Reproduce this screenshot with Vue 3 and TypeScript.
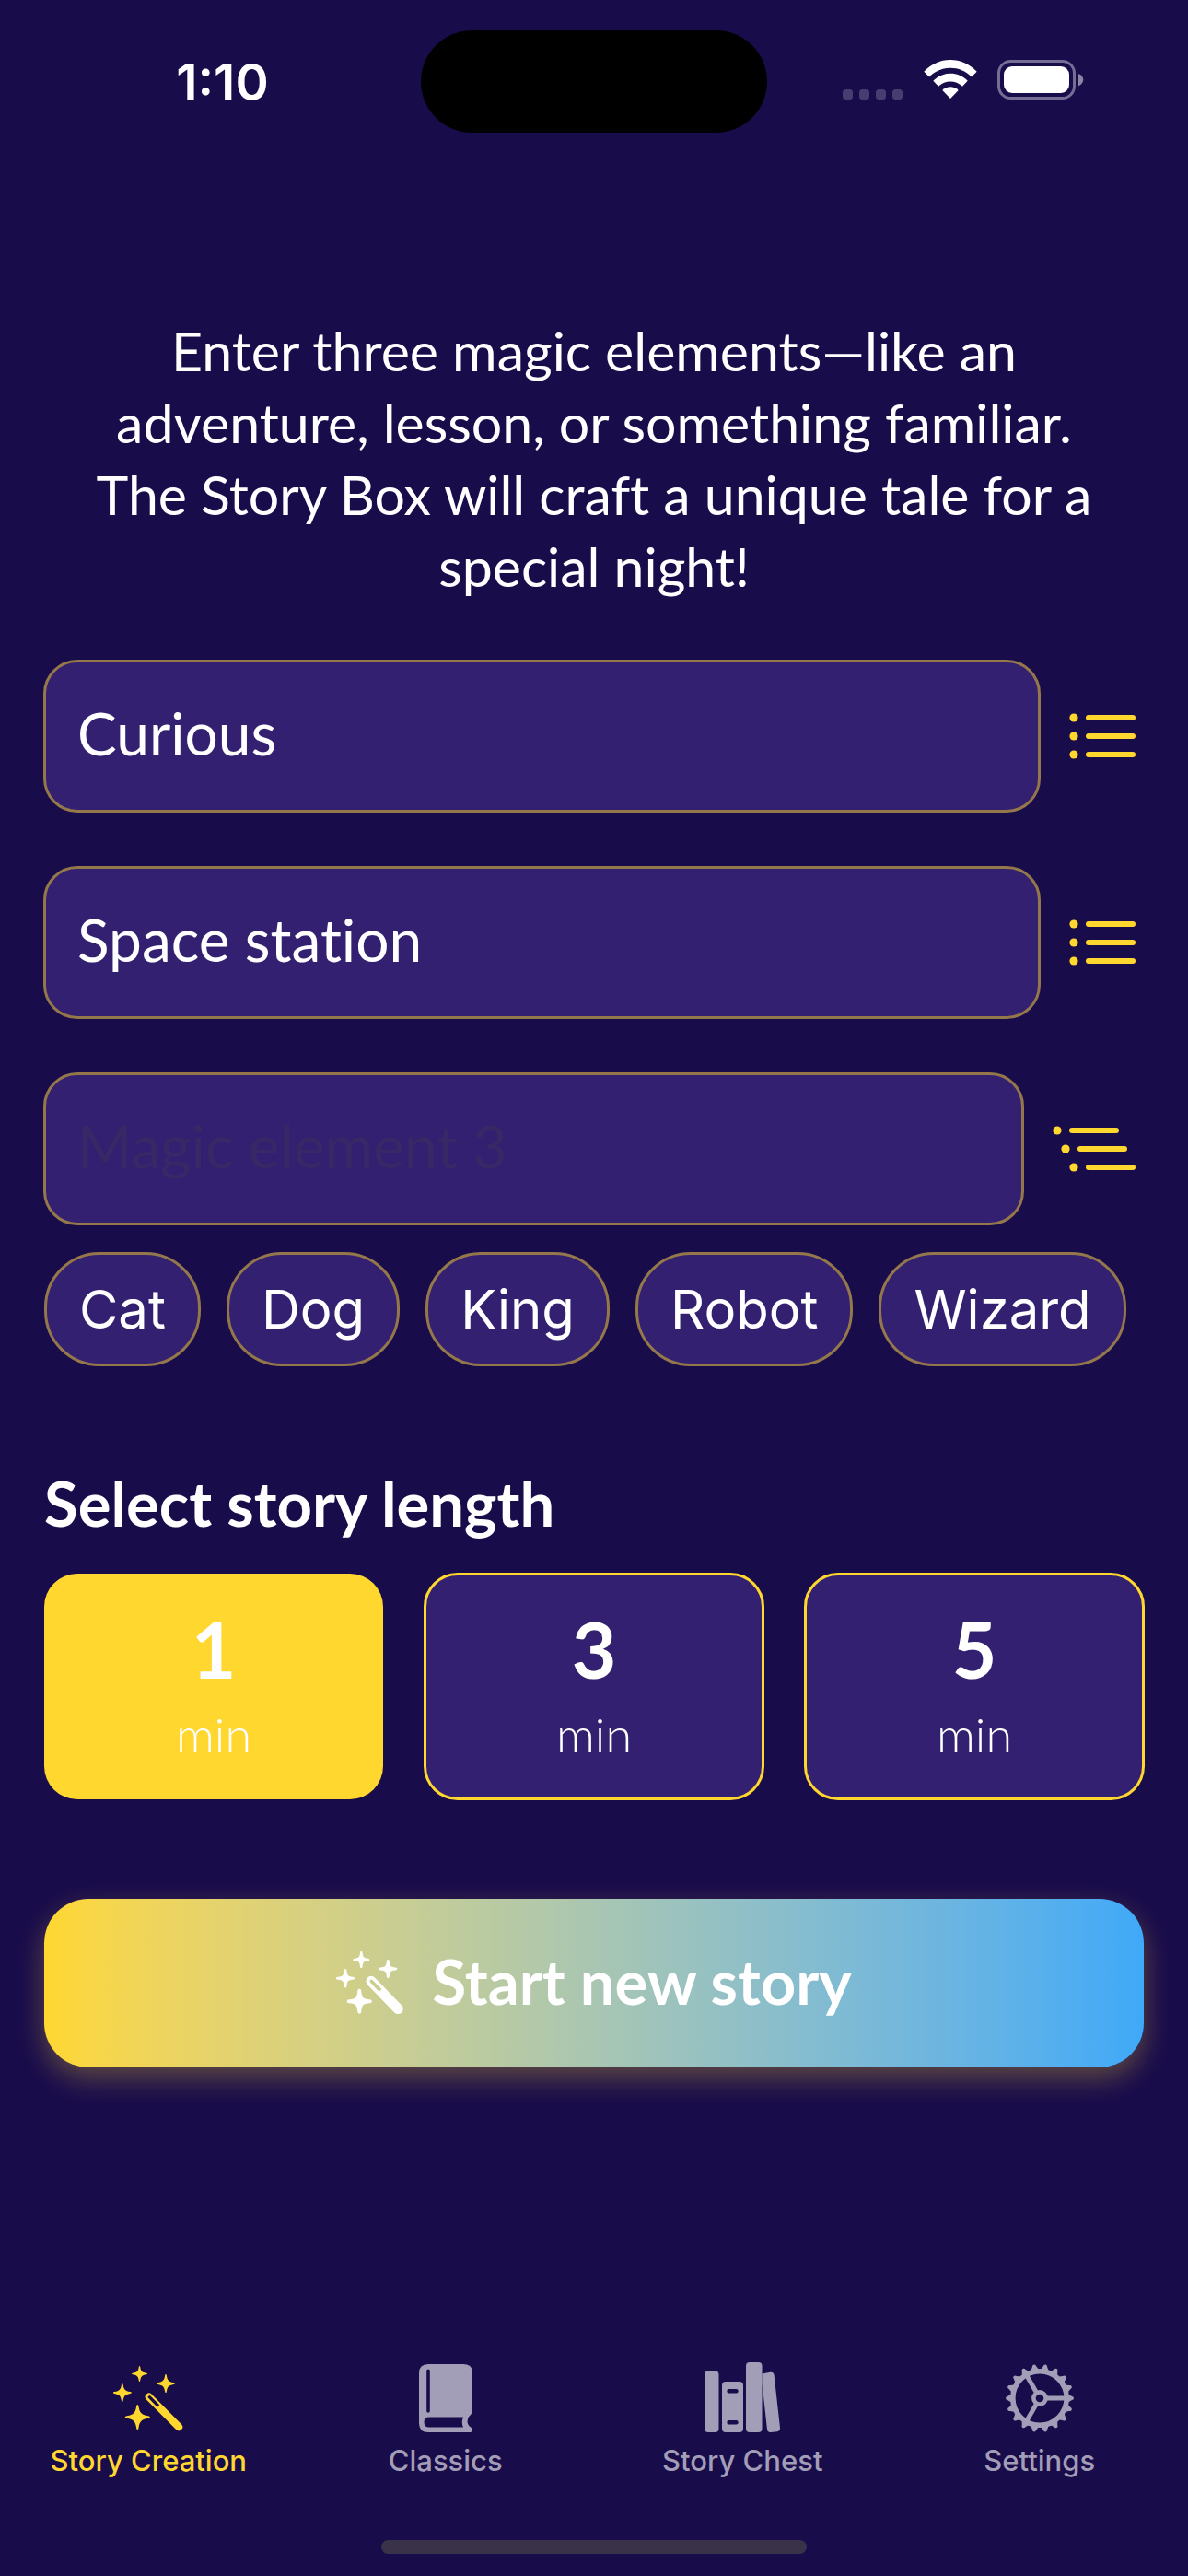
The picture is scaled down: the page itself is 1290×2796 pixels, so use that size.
<script setup lang="ts">
import { ref } from 'vue'

interface MagicElement {
  id: string
  value: string
  placeholder: string
  indented: boolean
}

const elements = ref<MagicElement[]>([
  { id: 'element-1', value: 'Curious', placeholder: 'Magic element 1', indented: false },
  { id: 'element-2', value: 'Space station', placeholder: 'Magic element 2', indented: false },
  { id: 'element-3', value: '', placeholder: 'Magic element 3', indented: true },
])

const suggestions = ['Cat', 'Dog', 'King', 'Robot', 'Wizard']
const lengths = [1, 3, 5]
const selectedLength = ref(1)

const tabs = [
  { id: 'creation', label: 'Story Creation' },
  { id: 'classics', label: 'Classics' },
  { id: 'chest', label: 'Story Chest' },
  { id: 'settings', label: 'Settings' },
]
const activeTab = ref('creation')

const gearTeeth = Array.from({ length: 18 }, (_, i) => i * 20)

function useSuggestion(word: string) {
  elements.value[2].value = word
}
</script>

<template>
  <div class="screen">
    <header class="status">
      <time class="clock">1:10</time>
      <div class="island"></div>
      <div class="indicators">
        <svg class="signal" width="65" height="11" viewBox="0 0 65 11" aria-hidden="true">
          <rect v-for="n in 4" :key="n" :x="(n - 1) * 18" y="0" width="11" height="11" rx="3.5" />
        </svg>
        <svg class="wifi" width="58" height="43" viewBox="0 0 58 43" aria-hidden="true">
          <path d="M0.3 12.8C16-4.2 42-4.2 57.7 12.8L52 18.6C39.500 5.600 18.500 5.600 6 18.600Z" />
          <path d="M10.300 22.800C20.500 12.200 37.500 12.200 47.700 22.800L42 28.700C34.800 21.600 23.200 21.600 16 28.700Z" />
          <path d="M20.300 33C25.300 28.100 32.700 28.100 37.700 33L29 42Z" />
        </svg>
        <svg class="battery" width="94" height="43" viewBox="0 0 94 43" aria-hidden="true">
          <rect class="battery-shell" x="1.500" y="1.500" width="82" height="40" rx="13" />
          <rect x="7" y="7" width="71" height="29" rx="9" />
          <path class="battery-nub" d="M88 15C95 18 95 25 88 28.500Z" />
        </svg>
      </div>
    </header>

    <main class="content">
      <p class="prompt">
        Enter three magic elements—like an adventure, lesson, or something familiar. The Story Box will craft a unique tale for a special night!
      </p>

      <div class="fields">
        <div v-for="item in elements" :key="item.id" class="field">
          <input
            :id="item.id"
            v-model="item.value"
            class="field-input"
            type="text"
            :placeholder="item.placeholder"
            :aria-label="item.placeholder"
          />
          <button class="list-button" type="button" aria-label="Show suggestions">
            <svg v-if="!item.indented" width="72" height="50" viewBox="0 0 72 50" aria-hidden="true">
              <g v-for="n in 3" :key="n">
                <circle cx="5" :cy="n * 20 - 15" r="4.600" />
                <rect x="18" :y="n * 20 - 18" width="54" height="6" rx="3" />
              </g>
            </svg>
            <svg v-else width="90" height="50" viewBox="0 0 90 50" aria-hidden="true">
              <g v-for="n in 3" :key="n">
                <circle :cx="n * 9 - 4" :cy="n * 20 - 15" r="4.600" />
                <rect :x="n * 9 + 9" :y="n * 20 - 18" width="54" height="6" rx="3" />
              </g>
            </svg>
          </button>
        </div>
      </div>

      <div class="chips">
        <button v-for="word in suggestions" :key="word" class="chip" type="button" @click="useSuggestion(word)">
          {{ word }}
        </button>
      </div>

      <h2 id="length-title" class="section-title">Select story length</h2>
      <div class="lengths" role="radiogroup" aria-labelledby="length-title">
        <label
          v-for="minutes in lengths"
          :key="minutes"
          class="length"
          :class="{ selected: minutes === selectedLength }"
        >
          <input v-model="selectedLength" class="length-radio" type="radio" name="length" :value="minutes" />
          <span class="length-number">{{ minutes }}</span>
          <span class="length-unit">min</span>
        </label>
      </div>

      <button class="start" type="button">
        <svg class="wand-bold" width="74" height="70" viewBox="0 0 74 70" aria-hidden="true">
          <defs>
            <path id="spark-bold" d="M0-10C1-10 1.300-9.500 1.500-8C2-3 3-2 8-1.500C9.500-1.300 10-1 10 0C10 1 9.500 1.300 8 1.500C3 2 2 3 1.500 8C1.300 9.500 1 10 0 10C-1 10-1.300 9.500-1.500 8C-2 3-3 2-8 1.500C-9.500 1.300-10 1-10 0C-10-1-9.500-1.300-8-1.500C-3-2-2-3-1.500-8C-1.300-9.500-1-10 0-10Z" />
          </defs>
          <use href="#spark-bold" transform="translate(27.300 9) scale(.9)" />
          <use href="#spark-bold" transform="translate(56.300 19)" />
          <use href="#spark-bold" transform="translate(10 29.300)" />
          <use href="#spark-bold" transform="translate(25.300 54.300) scale(1.350)" />
          <path
            fill-rule="evenodd"
            d="M34.100 36.200A5.500 5.500 0 0 1 41.900 28.400L71.100 58.600A5.500 5.500 0 0 1 63.300 66.400ZM37.200 31.300A1.600 1.600 0 0 0 36.800 33.500L46.600 43.700L49.400 41L39.400 31A1.600 1.600 0 0 0 37.200 31.300Z"
          />
        </svg>
        <span>Start new story</span>
      </button>
    </main>

    <nav class="tabs" aria-label="Main">
      <a
        v-for="tab in tabs"
        :key="tab.id"
        class="tab"
        :class="{ active: tab.id === activeTab }"
        :href="`#${tab.id}`"
        @click.prevent="activeTab = tab.id"
      >
        <svg v-if="tab.id === 'creation'" width="76" height="76" viewBox="0 -4 76 76" aria-hidden="true">
          <defs>
            <path id="spark-fine" d="M0-10C.5-10 .7-9.500 .9-8.500C1.700-3.500 3-2 8.500-.9C9.500-.7 10-.5 10 0C10 .5 9.500 .7 8.500 .9C3 2 1.700 3.500 .9 8.500C.7 9.500 .5 10 0 10C-.5 10-.7 9.500-.9 8.500C-1.700 3.500-3 2-8.500 .9C-9.500 .7-10 .5-10 0C-10-.5-9.500-.7-8.500-.9C-3-2-1.700-3.500-.9-8.500C-.7-9.500-.5-10 0-10Z" />
          </defs>
          <use href="#spark-fine" transform="translate(28.500 8.500) scale(.85)" />
          <use href="#spark-fine" transform="translate(57 19)" />
          <use href="#spark-fine" transform="translate(9.800 29)" />
          <use href="#spark-fine" transform="translate(26.300 55.500) scale(1.350)" />
          <path
            fill-rule="evenodd"
            d="M35.900 36.500A4.100 4.100 0 0 1 41.700 30.700L74 63.300A4.100 4.100 0 0 1 68.200 69.100ZM38.200 32.700A1.400 1.400 0 0 0 38.100 34.800L47.800 44.700L50.200 42.300L40.400 32.600A1.400 1.400 0 0 0 38.200 32.700Z"
          />
        </svg>
        <svg v-else-if="tab.id === 'classics'" width="58" height="76" viewBox="0 -2 58 76" aria-hidden="true">
          <path
            fill-rule="evenodd"
            d="M10 0H48Q58 0 58 10V50Q58 53 56 55Q52.500 58 52.500 62.500Q52.500 66.500 56.500 68.800Q58 70 58 71.500Q58 74 55.500 74H10Q0 74 0 64V10Q0 0 10 0ZM10 5.500Q8.200 5.500 8.200 7.300V51Q8.200 52.800 10 52.800Q11.800 52.800 11.800 51V7.300Q11.800 5.500 10 5.500ZM11 57.500Q5.500 57.500 5.500 63Q5.500 68.500 11 68.500H48Q45.500 63 48 57.500Z"
          />
        </svg>
        <svg v-else-if="tab.id === 'chest'" width="83" height="76" viewBox="0 0 83 76" aria-hidden="true">
          <rect x="0" y="9.500" width="15.500" height="66.500" rx="4" />
          <path
            fill-rule="evenodd"
            d="M23 21H38Q42 21 42 25V72Q42 76 38 76H23Q19 76 19 72V25Q19 21 23 21ZM26.500 29A2.200 2.200 0 0 0 26.500 33.400H34.500A2.200 2.200 0 0 0 34.500 29ZM26.500 63A2.200 2.200 0 0 0 26.500 67.400H34.500A2.200 2.200 0 0 0 34.500 63Z"
          />
          <rect x="45" y="0" width="17.500" height="76" rx="4" />
          <path d="M62.500 12.500L71.500 10.700Q75 10.300 75.600 14L82 71Q82.400 74.600 79 75.300L72 76Q68.400 76.400 68 73L62.500 23Z" />
        </svg>
        <svg v-else class="gear" width="76" height="76" viewBox="-38 -39 76 76" aria-hidden="true">
          <path
            v-for="angle in gearTeeth"
            :key="angle"
            class="gear-tooth"
            :transform="`rotate(${angle})`"
            d="M30-4.500Q33-3.500 34.500-2.300Q37-1.900 37-0Q37 1.900 34.500 2.300Q33 3.500 30 4.500Z"
          />
          <circle r="29.200" stroke-width="5.600" />
          <circle r="6.600" stroke-width="4.600" />
          <path d="M8 0H28M-4-6.900L-14-24.200M-4 6.900L-14 24.200" stroke-width="5" />
        </svg>
        <span class="tab-label">{{ tab.label }}</span>
      </a>
    </nav>
    <div class="home-indicator"></div>
  </div>
</template>

<style>
body {
  margin: 0;
  background: #190c4b;
}
</style>

<style scoped>
.screen {
  box-sizing: border-box;
  display: flex;
  flex-direction: column;
  min-height: 100vh;
  padding-bottom: 24px;
  background: #190c4b;
  color: #fff;
  font-family: Lato, 'Open Sans', sans-serif;
  font-variant-ligatures: none;
}

button,
input {
  border: 0;
  margin: 0;
  color: inherit;
  font: inherit;
  font-variant-ligatures: none;
}

svg {
  display: block;
  flex: none;
  fill: currentColor;
}

.status {
  display: grid;
  grid-template-columns: 1fr 376px 1fr;
  align-items: center;
  height: 111px;
  padding-top: 33px;
}

.clock {
  justify-self: center;
  padding-left: 26px;
  font: 600 55px/64px Inter, sans-serif;
}

.island {
  height: 111px;
  border-radius: 56px;
  background: #000;
}

.indicators {
  display: flex;
  align-items: flex-end;
  justify-content: center;
  padding: 0 32px 4px 0;
}

.signal {
  margin-right: 23px;
  fill: #483d70;
}

.wifi {
  margin-right: 22px;
}

.battery-shell {
  fill: none;
  stroke: #756d93;
  stroke-width: 3;
}

.battery-nub {
  fill: #8c86a5;
}

.content {
  display: flex;
  flex-direction: column;
  padding: 198px 48px 0;
}

.prompt {
  margin: 0 48px;
  font-size: 59px;
  font-weight: 400;
  line-height: 78px;
  text-align: center;
}

.fields {
  display: flex;
  flex-direction: column;
  gap: 60px;
  margin-top: 63px;
}

.field {
  display: flex;
  align-items: center;
}

.field-input {
  box-sizing: border-box;
  flex: 1;
  min-width: 0;
  height: 164px;
  padding: 0 36px 8px;
  border-radius: 36px;
  outline: 3px solid #94784b;
  outline-offset: -2px;
  background: #332070;
  font-size: 64px;
  font-weight: 400;
}

.field-input::placeholder {
  color: #382866;
  opacity: 1;
}

.list-button {
  padding: 20px 9px 20px 32px;
  background: none;
  color: #ffd72f;
}

.chips {
  display: flex;
  gap: 28px;
  margin-top: 30px;
  overflow: hidden;
}

.chip {
  flex: none;
  height: 124px;
  padding: 0 35px;
  border: 3px solid #94784b;
  border-radius: 60px;
  background: #332070;
  font: 400 58px/76px Inter, sans-serif;
}

.section-title {
  margin: 108px 0 0;
  font-size: 67px;
  font-weight: 700;
  line-height: 80px;
}

.lengths {
  display: grid;
  grid-template-columns: repeat(3, 1fr);
  gap: 45px;
  margin-top: 37px;
}

.length {
  display: flex;
  flex-direction: column;
  align-items: center;
  box-sizing: border-box;
  height: 245px;
  padding-top: 30px;
  border-radius: 36px;
  outline: 3px solid #ffd72f;
  outline-offset: -2px;
  background: #332070;
}

.length.selected {
  outline: none;
  background: #ffd72f;
}

.length-radio {
  appearance: none;
  width: 0;
  height: 0;
}

.length-number {
  font-size: 84px;
  font-weight: 700;
  line-height: 104px;
}

.length-unit {
  font-size: 52px;
  font-weight: 300;
  line-height: 80px;
}

.start {
  display: flex;
  align-items: center;
  justify-content: center;
  gap: 30px;
  height: 183px;
  padding: 0 0 6px;
  margin-top: 108px;
  border-radius: 48px;
  background: linear-gradient(90deg in oklab, #ffd72f, #3fa9f8);
  box-shadow: 0 12px 30px rgb(255 215 47 / 30%);
  font-size: 67px;
  font-weight: 700;
}

.wand-bold {
  margin-top: 6px;
}

.tabs {
  display: grid;
  grid-template-columns: repeat(4, 1fr);
  margin-top: auto;
}

.tab {
  display: flex;
  flex-direction: column;
  align-items: center;
  gap: 13px;
  color: #a39eb7;
  text-decoration: none;
}

.tab.active {
  color: #ffd72f;
}

.tab-label {
  font: 500 31px/36px Inter, sans-serif;
}

.gear {
  fill: none;
  stroke: currentColor;
}

.gear-tooth {
  fill: currentColor;
  stroke: none;
}

.home-indicator {
  align-self: center;
  width: 462px;
  height: 15px;
  margin-top: 68px;
  border-radius: 8px;
  background: #393249;
}
</style>
